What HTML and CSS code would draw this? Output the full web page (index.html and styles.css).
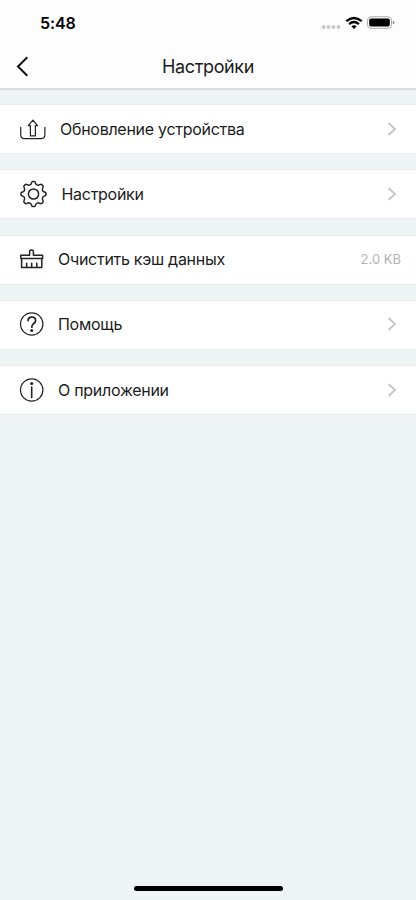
FILE: index.html
```
<!DOCTYPE html>
<html lang="ru">
<head>
<meta charset="utf-8">
<title>Настройки</title>
<link rel="stylesheet" href="styles.css">
</head>
<body>
<header class="header">
  <div class="status">
    <span class="time">5:48</span>
    <svg class="indicators" width="76" height="18" viewBox="0 0 76 18">
      <g fill="#c9c9c9"><circle cx="3.5" cy="13" r="2"/><circle cx="8.5" cy="13" r="2"/><circle cx="13.5" cy="13" r="2"/><circle cx="18.5" cy="13" r="2"/></g>
      <g fill="none" stroke="#000" stroke-width="2.4"><path d="M26.3 7.2Q34 .6 41.7 7.2"/><path d="M29.1 10.2Q34 6 38.9 10.2"/></g>
      <path d="M31.3 12.3Q34 10 36.7 12.3L34 15z"/>
      <rect x="47.5" y="2.8" width="24" height="11.5" rx="3.5" fill="#fff" stroke="#aaa"/>
      <rect x="49.2" y="4.5" width="20.6" height="8.1" rx="1.8"/>
      <path d="M72.8 6.5Q74.5 7.3 74.5 8.5T72.8 10.5z" fill="#888"/>
    </svg>
  </div>
  <div class="navbar">
    <svg class="back" width="14" height="22" viewBox="0 0 14 22"><path d="M12.3 1.3 3 10.5l9.3 9.2"/></svg>
    <h1 class="title">Настройки</h1>
  </div>
</header>
<main class="list">
  <a class="row update">
    <svg class="icon" viewBox="0 0 28 28"><g stroke-width="1.2"><path d="M1.7 12.3v7.2q0 4.1 4.1 4.1h16q4.1 0 4.1-4.1v-7.2"/><path d="M13.9 5.2 18.6 10.6H16.4V20.8H11.4V10.6H9.2z"/></g></svg>
    <span class="label">Обновление устройства</span>
    <svg class="chevron" viewBox="0 0 10 16"><path d="M1.5 2 8 8l-6.5 6"/></svg>
  </a>
  <a class="row settings">
    <svg class="icon" viewBox="-14.5 -14 28 28"><path stroke-width="1.5" d="M-2-11.2Q-1.7-12.5-.8-12.5H.8Q1.7-12.5 2-11.2Q2.2-9.5 3.5-9.1Q4.8-8.5 6.5-9.4Q7.6-10 8.3-9.4L9.4-8.3Q10-7.6 9.4-6.5Q8.5-4.8 9.1-3.5Q9.5-2.2 11.2-2Q12.5-1.7 12.5-.8V.8Q12.5 1.7 11.2 2Q9.5 2.2 9.1 3.5Q8.5 4.8 9.4 6.5Q10 7.6 9.4 8.3L8.3 9.4Q7.6 10 6.5 9.4Q4.8 8.5 3.5 9.1Q2.2 9.5 2 11.2Q1.7 12.5.8 12.5H-.8Q-1.7 12.5-2 11.2Q-2.2 9.5-3.5 9.1Q-4.8 8.5-6.5 9.4Q-7.6 10-8.3 9.4L-9.4 8.3Q-10 7.6-9.4 6.5Q-8.5 4.8-9.1 3.5Q-9.5 2.2-11.2 2Q-12.5 1.7-12.5.8V-.8Q-12.5-1.7-11.2-2Q-9.5-2.2-9.1-3.5Q-8.5-4.8-9.4-6.5Q-10-7.6-9.4-8.3L-8.3-9.4Q-7.6-10-6.5-9.4Q-4.8-8.5-3.5-9.1Q-2.2-9.5-2-11.2z"/><circle r="5.1" stroke-width="1.5"/></svg>
    <span class="label">Настройки</span>
    <svg class="chevron" viewBox="0 0 10 16"><path d="M1.5 2 8 8l-6.5 6"/></svg>
  </a>
  <a class="row cache">
    <svg class="icon" viewBox="0 0 28 28"><path stroke-width="1.5" d="M1.8 10.3H10.6V6.7Q10.6 5 12.5 5T14.4 6.7V10.3H23.6V13.6H1.8zM2.6 13.6V22.4H22.8V13.6M7.6 18.3v4M12.7 18.3v4M17.8 18.3v4"/></svg>
    <span class="label">Очистить кэш данных</span>
    <span class="value">2.0 KB</span>
  </a>
  <a class="row help">
    <svg class="icon" viewBox="0 0 28 28"><circle cx="12.7" cy="14" r="11.2" stroke-width="1.2"/><path stroke-width="1.7" d="M9 10.6Q9.2 7.2 12.9 7.2T16.6 10.4Q16.6 12.1 14.7 13.5T12.8 17.2"/><circle class="dot" cx="12.7" cy="20.5" r="1.5"/></svg>
    <span class="label">Помощь</span>
    <svg class="chevron" viewBox="0 0 10 16"><path d="M1.5 2 8 8l-6.5 6"/></svg>
  </a>
  <a class="row about">
    <svg class="icon" viewBox="0 0 28 28"><circle cx="12.7" cy="14" r="11.2" stroke-width="1.2"/><path stroke-width="1.6" d="M12.7 11v10.4"/><circle class="dot" cx="12.7" cy="7.5" r="1.6"/></svg>
    <span class="label">О приложении</span>
    <svg class="chevron" viewBox="0 0 10 16"><path d="M1.5 2 8 8l-6.5 6"/></svg>
  </a>
</main>
<footer class="home"><div class="home-bar"></div></footer>
</body>
</html>
```
FILE: styles.css
```
* { box-sizing: border-box; }
body {
  margin: 0;
  height: 900px;
  display: flex;
  flex-direction: column;
  background: #eff4f5;
  color: #1c1c1c;
  font-family: Inter, "Liberation Sans", sans-serif;
}
.header { height: 90px; background: #fdfdfd; border-bottom: 2px solid #d9dddd; }
.status {
  height: 44px;
  padding: 2px 20px 0 40px;
  display: flex;
  align-items: center;
  justify-content: space-between;
}
.time { color: #000; font-size: 16px; font-weight: 600; letter-spacing: -.1px; }
.navbar {
  height: 45px;
  padding: 0 15px;
  display: grid;
  grid-template-columns: 14px 1fr 14px;
  align-items: center;
}
.back, .icon, .chevron { fill: none; stroke-linecap: round; stroke-linejoin: round; }
.back { stroke: #111; stroke-width: 2; stroke-linecap: butt; stroke-linejoin: miter; }
.title { margin: 0; padding-top: 1px; text-align: center; font-size: 18px; font-weight: 400; line-height: 22px; letter-spacing: -.35px; }
.list { flex: 1; padding-top: 14px; display: flex; flex-direction: column; gap: 15.3px; }
.row {
  height: 50px;
  padding: 0 19px 1px;
  display: flex;
  align-items: center;
  background: #fff;
  border: solid #e8ebec;
  border-width: 1px 0;
}
.icon { width: 28px; height: 28px; flex: none; stroke: #222; }
.dot { fill: #222; stroke: none; }
.label { flex: 1; margin-left: 11px; font-size: 16px; line-height: 20px; letter-spacing: -.28px; white-space: nowrap; }
.update .label { margin-left: 13px; }
.settings .label { margin-left: 14.5px; }
.chevron { width: 10px; height: 16px; stroke: #c5c6c8; stroke-width: 1.9; stroke-linecap: butt; stroke-linejoin: miter; }
.cache { padding-right: 15px; }
.value { color: #b3b3b3; font-size: 13px; }
.home { height: 16px; display: flex; justify-content: center; }
.home-bar { width: 149px; height: 5px; margin-top: 2px; border-radius: 3px; background: #000; }
```
